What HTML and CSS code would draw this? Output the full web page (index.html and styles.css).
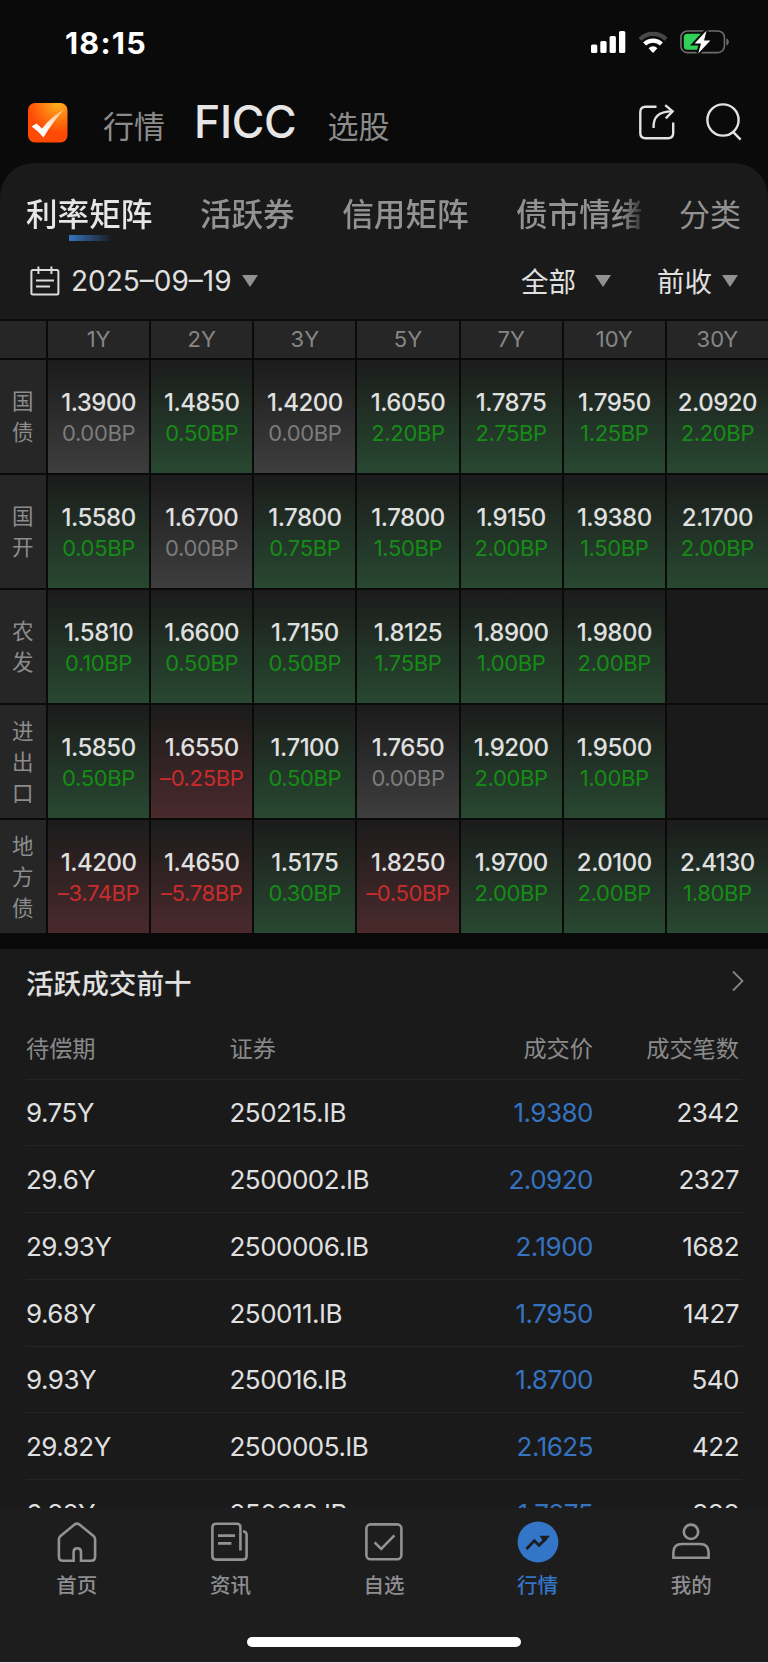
FILE: index.html
```html
<!DOCTYPE html>
<html lang="zh-CN">
<head>
    <meta charset="UTF-8">
    <meta name="viewport" content="width=device-width, initial-scale=1.0">
    <title>FICC - 利率矩阵</title>
    <link rel="stylesheet" href="styles.css">
</head>
<body>
    <div class="screen">
        <!-- Status Bar -->
        <div class="status-bar">
            <span class="time">18:15</span>
            <div class="status-icons">
                <svg width="35" height="22" viewBox="0 0 35 22" fill="#fff">
                    <rect x="0" y="13.5" width="6.3" height="8.5" rx="1.6"/>
                    <rect x="9.3" y="10" width="6.3" height="12" rx="1.6"/>
                    <rect x="18.6" y="5" width="6.3" height="17" rx="1.6"/>
                    <rect x="28" y="0" width="6.3" height="22" rx="1.6"/>
                </svg>
                <svg width="30" height="22" viewBox="0 0 30 22" fill="none" stroke-width="4.2">
                    <path d="M2 8.2 A18.5 18.5 0 0 1 28 8.2" stroke="#48484a"/>
                    <path d="M6.6 13 A12 12 0 0 1 23.4 13" stroke="#fff"/>
                    <path d="M10.6 17.2 A6.2 6.2 0 0 1 19.4 17.2 L15 22 Z" fill="#fff"/>
                </svg>
                <svg width="50" height="24" viewBox="0 0 50 24" fill="none">
                    <rect x="0.9" y="1" width="43.5" height="21.6" rx="6.5" stroke="#6d6d6f" stroke-width="1.6"/>
                    <path d="M46.4 8.2 C49.6 9.6 49.6 14.2 46.4 15.6 Z" fill="#6d6d6f"/>
                    <path d="M7.5 3.8 H23 V19.8 H7.5 Q3.8 19.8 3.8 16.2 V7.4 Q3.8 3.8 7.5 3.8Z" fill="#30d158"/>
                    <path d="M26.6 0.6 L14.6 13.4 H21 L18.2 23.4 L30.4 10.4 H24Z" fill="#fff" stroke="#0a0a0a" stroke-width="4" paint-order="stroke"/>
                </svg>
            </div>
        </div>

        <!-- Top Navigation -->
        <div class="top-nav">
            <svg class="logo" width="40" height="40" viewBox="0 0 40 40">
                <defs>
                    <radialGradient id="logo-bg" cx="0.75" cy="0" r="0.75">
                        <stop offset="0" stop-color="#ffb21e"/>
                        <stop offset="1" stop-color="#ff4a05"/>
                    </radialGradient>
                    <linearGradient id="logo-check" x1="0" y1="1" x2="1" y2="0">
                        <stop offset="0.3" stop-color="#fff"/>
                        <stop offset="1" stop-color="#ffb878"/>
                    </linearGradient>
                </defs>
                <rect width="39.5" height="39.5" rx="7" fill="url(#logo-bg)"/>
                <path d="M3.6 23.4 L8.6 20.6 L14 25.6 C21 17 28 11 36.6 6 C29 14 22 23.5 15.4 34.6 C12 30 8 26.5 3.6 23.4Z" fill="url(#logo-check)"/>
            </svg>
            <div class="top-tabs">
                <span>行情</span>
                <span class="current">FICC</span>
                <span>选股</span>
            </div>
            <div class="top-actions">
                <svg width="36" height="36" viewBox="0 0 36 36" fill="none" stroke="#e2e2e2" stroke-width="2.4">
                    <path d="M17.5 2.8 H6.5 Q1.3 2.8 1.3 8 V29 Q1.3 34.2 6.5 34.2 H29 Q34.2 34.2 34.2 29 V18.5"/>
                    <path d="M14.6 24 C14 13 19.5 7.5 33 7.4"/>
                    <path d="M26.2 1.2 L33.6 7.4 L26.8 14.4"/>
                </svg>
                <svg width="36" height="38" viewBox="0 0 36 38" fill="none" stroke="#e2e2e2" stroke-width="2.4">
                    <circle cx="17" cy="17" r="15.6"/>
                    <path d="M26.8 28.6 L34.6 36.6"/>
                </svg>
            </div>
        </div>

        <!-- Rate Matrix -->
        <div class="panel">
            <div class="category-tabs">
                <div class="category-list">
                    <span class="active">利率矩阵</span>
                    <span>活跃券</span>
                    <span>信用矩阵</span>
                    <span>债市情绪</span>
                </div>
                <span class="category-more">分类</span>
            </div>

            <div class="filters">
                <svg class="calendar" width="30" height="30" viewBox="0 0 30 30" fill="none" stroke="#dcdcdc" stroke-width="2">
                    <rect x="1.4" y="4" width="27" height="24.6" rx="1.5"/>
                    <path d="M8.4 0.5 V8 M21.4 0.5 V8 M6 14.4 H24 M6 20.6 H20"/>
                </svg>
                <span class="date">2025–09–19</span>
                <i class="caret"></i>
                <span class="filter-all">全部</span>
                <i class="caret"></i>
                <span class="filter-prev">前收</span>
                <i class="caret"></i>
            </div>

            <div class="matrix">
                <div class="term"></div>
                <div class="term">1Y</div>
                <div class="term">2Y</div>
                <div class="term">3Y</div>
                <div class="term">5Y</div>
                <div class="term">7Y</div>
                <div class="term">10Y</div>
                <div class="term">30Y</div>

                <div class="kind">国债</div>
                <div class="cell flat"><b>1.3900</b><span>0.00BP</span></div>
                <div class="cell up"><b>1.4850</b><span>0.50BP</span></div>
                <div class="cell flat"><b>1.4200</b><span>0.00BP</span></div>
                <div class="cell up"><b>1.6050</b><span>2.20BP</span></div>
                <div class="cell up"><b>1.7875</b><span>2.75BP</span></div>
                <div class="cell up"><b>1.7950</b><span>1.25BP</span></div>
                <div class="cell up"><b>2.0920</b><span>2.20BP</span></div>

                <div class="kind">国开</div>
                <div class="cell up"><b>1.5580</b><span>0.05BP</span></div>
                <div class="cell flat"><b>1.6700</b><span>0.00BP</span></div>
                <div class="cell up"><b>1.7800</b><span>0.75BP</span></div>
                <div class="cell up"><b>1.7800</b><span>1.50BP</span></div>
                <div class="cell up"><b>1.9150</b><span>2.00BP</span></div>
                <div class="cell up"><b>1.9380</b><span>1.50BP</span></div>
                <div class="cell up"><b>2.1700</b><span>2.00BP</span></div>

                <div class="kind">农发</div>
                <div class="cell up"><b>1.5810</b><span>0.10BP</span></div>
                <div class="cell up"><b>1.6600</b><span>0.50BP</span></div>
                <div class="cell up"><b>1.7150</b><span>0.50BP</span></div>
                <div class="cell up"><b>1.8125</b><span>1.75BP</span></div>
                <div class="cell up"><b>1.8900</b><span>1.00BP</span></div>
                <div class="cell up"><b>1.9800</b><span>2.00BP</span></div>
                <div class="cell"></div>

                <div class="kind">进出口</div>
                <div class="cell up"><b>1.5850</b><span>0.50BP</span></div>
                <div class="cell down"><b>1.6550</b><span>–0.25BP</span></div>
                <div class="cell up"><b>1.7100</b><span>0.50BP</span></div>
                <div class="cell flat"><b>1.7650</b><span>0.00BP</span></div>
                <div class="cell up"><b>1.9200</b><span>2.00BP</span></div>
                <div class="cell up"><b>1.9500</b><span>1.00BP</span></div>
                <div class="cell"></div>

                <div class="kind">地方债</div>
                <div class="cell down"><b>1.4200</b><span>–3.74BP</span></div>
                <div class="cell down"><b>1.4650</b><span>–5.78BP</span></div>
                <div class="cell up"><b>1.5175</b><span>0.30BP</span></div>
                <div class="cell down"><b>1.8250</b><span>–0.50BP</span></div>
                <div class="cell up"><b>1.9700</b><span>2.00BP</span></div>
                <div class="cell up"><b>2.0100</b><span>2.00BP</span></div>
                <div class="cell up"><b>2.4130</b><span>1.80BP</span></div>
            </div>
        </div>

        <!-- Top Ten Trades -->
        <div class="trades">
            <div class="trades-title">
                <h2>活跃成交前十</h2>
                <svg width="12" height="22" viewBox="0 0 12 22" fill="none" stroke="#858585" stroke-width="1.8">
                    <path d="M1 1.5 L10.5 11 L1 20.5"/>
                </svg>
            </div>
            <div class="trade-row trade-head"><span>待偿期</span><span>证券</span><span>成交价</span><span>成交笔数</span></div>
            <div class="trade-row"><span>9.75Y</span><span>250215.IB</span><span class="price">1.9380</span><span>2342</span></div>
            <div class="trade-row"><span>29.6Y</span><span>2500002.IB</span><span class="price">2.0920</span><span>2327</span></div>
            <div class="trade-row"><span>29.93Y</span><span>2500006.IB</span><span class="price">2.1900</span><span>1682</span></div>
            <div class="trade-row"><span>9.68Y</span><span>250011.IB</span><span class="price">1.7950</span><span>1427</span></div>
            <div class="trade-row"><span>9.93Y</span><span>250016.IB</span><span class="price">1.8700</span><span>540</span></div>
            <div class="trade-row"><span>29.82Y</span><span>2500005.IB</span><span class="price">2.1625</span><span>422</span></div>
            <div class="trade-row"><span>6.82Y</span><span>250018.IB</span><span class="price">1.7875</span><span>388</span></div>
        </div>

        <!-- Bottom Tab Bar -->
        <div class="tab-bar">
            <div class="tabs">
                <div class="tab">
                    <svg width="42" height="42" viewBox="0 0 42 42" fill="none" stroke="#929292" stroke-width="2.6">
                        <path d="M17.6 39.8 H7 Q2.9 39.8 2.9 35.8 V18.4 Q2.9 16.4 4.5 15 L18.5 3.6 Q21 1.8 23.5 3.6 L37.5 15 Q39.1 16.4 39.1 18.4 V35.8 Q39.1 39.8 35 39.8 H25 V31 Q25 27.2 21.3 27.2 Q17.6 27.2 17.6 31 Z"/>
                    </svg>
                    <span>首页</span>
                </div>
                <div class="tab">
                    <svg width="42" height="42" viewBox="0 0 42 42" fill="none" stroke="#929292" stroke-width="2.6">
                        <path d="M31.4 29.5 V6.4 Q31.4 2.8 27.8 2.8 H7 Q3.4 2.8 3.4 6.4 V35 Q3.4 38.6 7 38.6 H34 Q37.6 38.6 37.6 35 V13.8 Q37.6 10.6 34 10.2"/>
                        <path d="M9 14.6 H26 M9 22.4 H22.4"/>
                    </svg>
                    <span>资讯</span>
                </div>
                <div class="tab">
                    <svg width="42" height="42" viewBox="0 0 42 42" fill="none" stroke="#929292" stroke-width="2.6">
                        <rect x="3.4" y="3.4" width="35" height="34.8" rx="4"/>
                        <path d="M11.6 21.4 L18.2 28 L31.4 14.4"/>
                    </svg>
                    <span>自选</span>
                </div>
                <div class="tab active">
                    <svg width="42" height="42" viewBox="0 0 42 42" fill="none">
                        <circle cx="21" cy="21" r="20.4" fill="#3375c6"/>
                        <path d="M9.4 28 L17.4 19.8 L22 24.4 L29.4 17.2" stroke="#1d1d1d" stroke-width="2.8"/>
                        <path d="M22.6 14.8 H33 L27 21.4 Z" fill="#1d1d1d"/>
                    </svg>
                    <span>行情</span>
                </div>
                <div class="tab">
                    <svg width="42" height="42" viewBox="0 0 42 42" fill="none" stroke="#929292" stroke-width="2.6">
                        <circle cx="21" cy="10.8" r="7.2"/>
                        <path d="M3.4 36.8 V31.5 Q3.4 23 12 23 H30 Q38.6 23 38.6 31.5 V36.8 Z"/>
                    </svg>
                    <span>我的</span>
                </div>
            </div>
            <div class="home-indicator"></div>
        </div>
    </div>
</body>
</html>
```
FILE: styles.css
```css
/* General Reset */
* {
    margin: 0;
    padding: 0;
    box-sizing: border-box;
}

body {
    background-color: #e6dfe3;
    color: #e0e0e0;
    font-family: Inter, "Noto Sans CJK SC", sans-serif;
}

.screen {
    width: 768px;
    height: 1662px;
    display: flex;
    flex-direction: column;
    background-color: #0a0a0a;
    overflow: hidden;
}

/* Status Bar */
.status-bar {
    height: 84px;
    padding: 0 38px 0 65px;
    display: flex;
    justify-content: space-between;
    align-items: center;
    flex-shrink: 0;
}

.time {
    color: #ffffff;
    font-size: 30.5px;
    font-weight: 700;
    letter-spacing: 1.2px;
}

.status-icons {
    display: flex;
    align-items: center;
    gap: 12px;
}

/* Top Navigation */
.top-nav {
    height: 79px;
    padding: 0 26px 0 28px;
    display: flex;
    align-items: flex-start;
    flex-shrink: 0;
}

.logo {
    margin-top: 19px;
}

.top-tabs {
    margin: 10px 0 0 35px;
    display: flex;
    align-items: baseline;
    line-height: 56px;
    color: #8c8c8c;
    font-size: 31px;
    font-weight: 400;
}

.top-tabs .current {
    margin: 0 31px 0 29px;
    color: #e6e6e6;
    font-size: 44.5px;
    font-weight: 500;
    letter-spacing: -0.3px;
}

.top-actions {
    margin: 19px 0 0 auto;
    display: flex;
    align-items: center;
    gap: 31px;
}

/* Rate Matrix Panel */
.panel {
    background-color: #1a1a1a;
    border-radius: 34px 34px 0 0;
    flex-shrink: 0;
}

.category-tabs {
    height: 84px;
    padding: 29px 27px 0 26px;
    display: flex;
    justify-content: space-between;
    line-height: 46px;
    font-size: 31.6px;
    color: #929292;
}

.category-list {
    width: 630px;
    display: flex;
    gap: 47.5px;
    font-weight: 500;
    white-space: nowrap;
    -webkit-mask-image: linear-gradient(to right, #000 595px, transparent 622px);
    mask-image: linear-gradient(to right, #000 595px, transparent 622px);
}

.category-list .active {
    color: #e6e6e6;
}

.category-list .active::after {
    content: "";
    display: block;
    width: 44px;
    height: 6px;
    margin: -3px 0 0 43px;
    background: linear-gradient(to right, #3573c0, #1a1a1a);
}

.category-more {
    font-size: 31px;
    font-weight: 400;
}

.filters {
    height: 72px;
    padding: 0 30px 4px;
    display: flex;
    align-items: center;
    font-size: 27.5px;
    font-weight: 400;
}

.calendar,
.caret {
    flex-shrink: 0;
}

.date {
    margin: 0 9px 0 11px;
    width: 162px;
    font-size: 28px;
    white-space: nowrap;
}

.filter-all {
    margin: -3px 19px 0 auto;
}

.filter-prev {
    margin: -3px 10px 0 46px;
}

/* Dropdown arrow */
.caret {
    width: 16px;
    height: 12px;
    background-color: #929292;
    clip-path: polygon(0 0, 100% 0, 50% 100%);
}

.matrix {
    display: grid;
    grid-template-columns: 46px repeat(7, 1fr);
    grid-template-rows: 37px repeat(5, 113px);
    gap: 2px;
    border-top: 2px solid #0a0a0a;
    background-color: #0a0a0a;
}

.term {
    background-color: #262626;
    color: #868686;
    font-size: 22px;
    font-weight: 400;
    line-height: 37px;
    text-align: center;
}

.kind {
    padding: 1px 12px 0;
    display: flex;
    align-items: center;
    background-color: #262626;
    color: #8c8c8c;
    font-size: 21.5px;
    font-weight: 400;
    line-height: 31px;
    word-break: break-all;
}

.cell {
    padding: 27px 0 0;
    background-color: #1a1a1a;
    line-height: 31px;
    text-align: center;
}

.cell b {
    display: block;
    font-size: 24px;
    font-weight: 500;
    letter-spacing: -0.5px;
}

.cell span {
    display: block;
    font-size: 22px;
    font-weight: 400;
    letter-spacing: -0.35px;
    white-space: nowrap;
}

.up {
    background: linear-gradient(#1b1b1b, #284831);
}

.up span {
    color: #168c16;
}

.down {
    background: linear-gradient(#1b1b1b, #4a2a2c);
}

.down span {
    color: #c92c2c;
}

.flat {
    background: linear-gradient(#1b1b1b, #3e3e3e);
}

.flat span {
    color: #7c7c7c;
}

/* Top Ten Trades */
.trades {
    height: 559px;
    margin-top: 16px;
    padding: 0 26px;
    background-color: #1a1a1a;
    overflow: hidden;
    flex-shrink: 0;
}

.trades-title {
    height: 67px;
    display: flex;
    align-items: center;
    justify-content: space-between;
}

.trades-title h2 {
    margin-top: -1px;
    font-size: 27.6px;
    font-weight: 500;
}

.trades-title svg {
    margin: -3px -2px 0 0;
}

.trade-row {
    height: 66.75px;
    padding: 1px 3px 0 0;
    display: grid;
    grid-template-columns: 203.5px 200px 1fr 146px;
    align-items: center;
    border-bottom: 1.5px solid #252525;
    font-size: 26px;
    font-weight: 400;
    letter-spacing: -0.5px;
}

.trade-row span:nth-child(n+3) {
    text-align: right;
}

.trade-head {
    height: 63.5px;
    padding-top: 0;
    color: #8a8a8a;
    font-size: 23.2px;
    font-weight: 400;
    letter-spacing: 0;
}

.trade-row .price {
    color: #3573c0;
}

/* Bottom Tab Bar */
.tab-bar {
    height: 154px;
    padding-top: 13px;
    background-color: #1d1d1d;
    flex-shrink: 0;
}

.tabs {
    display: flex;
}

.tab {
    flex: 1;
    display: flex;
    flex-direction: column;
    align-items: center;
    color: #8e8e92;
    font-size: 20.5px;
    font-weight: 500;
    line-height: 30px;
}

.tab span {
    margin-top: 8px;
}

.tab.active {
    color: #3375c6;
}

.home-indicator {
    width: 274px;
    height: 10px;
    margin: 36px auto 0;
    border-radius: 5px;
    background-color: #ffffff;
}
```
